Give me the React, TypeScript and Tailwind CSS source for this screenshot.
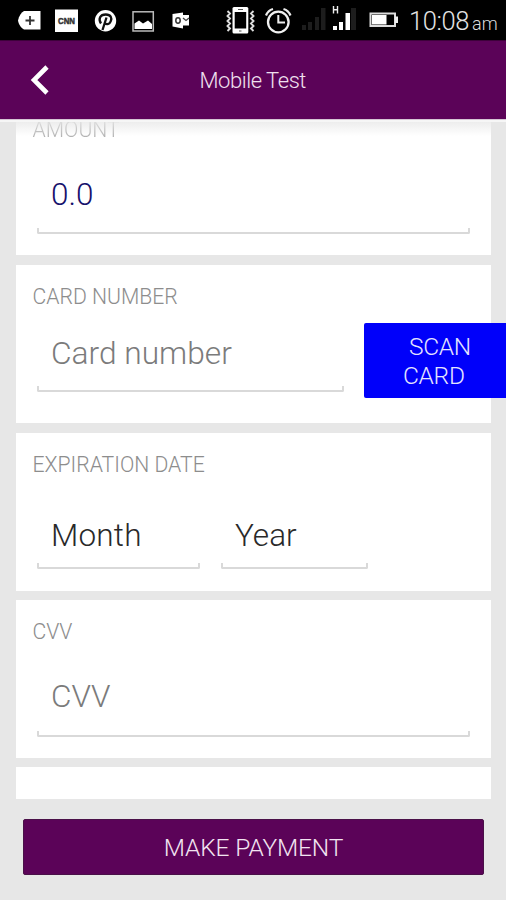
import type { ReactNode } from "react";

function Underline({ className }: { className: string }) {
  return <div className={`h-[6px] rounded-b-[2px] border-x-2 border-b-2 border-[#d9d9d9] ${className}`} />;
}

function Label({ children }: { children: ReactNode }) {
  return (
    <div className="h-6 whitespace-nowrap pl-[16.500px] text-[21.200px] font-light leading-[25px] text-[#8d8d8d]">{children}</div>
  );
}

function StatusBar() {
  return (
    <div className="flex h-10 shrink-0 bg-black text-white">
      <svg className="h-10 w-12" viewBox="0 0 48 40">
        <path d="M24 11H40.5V29.5H24C21 28 18.5 24 18 20.5C19 16 21 12.500 24 11Z" fill="#fff" />
        <path d="M30 16V25M25.500 20.500H34.500" stroke="#333" strokeWidth="1.800" />
      </svg>
      <svg className="h-10 w-9" viewBox="48 0 36 40">
        <rect x="55" y="9.500" width="23" height="22.500" fill="#fff" />
        <text x="66.500" y="24" textAnchor="middle" textLength="17" lengthAdjust="spacingAndGlyphs" className="font-['Liberation_Sans'] text-[9px] font-bold" fill="#333" stroke="#333" strokeWidth=".5">CNN</text>
      </svg>
      <svg className="h-10 w-10" viewBox="84 0 40 40">
        <circle cx="105.500" cy="20.800" r="10.700" fill="#fff" />
        <path d="M101 23.500C98 19 100 14.500 105.800 14.500C111 14.500 112 18 110.800 21C109.500 24.800 105.500 25 104.500 22.500M106.500 17.500L102.500 30" fill="none" stroke="#111" strokeWidth="2.300" />
      </svg>
      <svg className="h-10 w-10" viewBox="124 0 40 40">
        <rect x="133" y="11.800" width="20.300" height="19.200" fill="none" stroke="#bbb" strokeWidth="1.500" />
        <path d="M134.500 29V23.500L139 20.500L143 23.500L148 20.500L152 24V29Z" fill="#fff" />
      </svg>
      <svg className="h-10 w-[56px]" viewBox="164 0 56 40">
        <path d="M172.500 14L183 12.500V28.500L172.500 26.500Z" fill="#fff" />
        <path d="M183 15H189V25.500H183" fill="#fff" />
        <path d="M183 18L186 20.500L189 18" fill="none" stroke="#444" strokeWidth="1.300" />
        <ellipse cx="178" cy="20.500" rx="2.200" ry="2.700" fill="none" stroke="#333" strokeWidth="1.500" />
      </svg>
      <svg className="h-10 w-10" viewBox="220 0 40 40">
        <rect x="232.500" y="7" width="15.800" height="26.500" rx="1.500" fill="#fff" />
        <rect x="234.700" y="12" width="11.500" height="16.500" />
        <path d="M238 9.500H243M239 31H241.500" stroke="#555" strokeWidth="1" />
        <path d="M227.500 11L230 13.500L227.500 16L230 18.500L227.500 21L230 23.500L227.500 26L230 28.500L227.500 31M253.500 11L251 13.500L253.500 16L251 18.500L253.500 21L251 23.500L253.500 26L251 28.500L253.500 31" fill="none" stroke="#ddd" strokeWidth="1.900" />
      </svg>
      <svg className="h-10 w-9" viewBox="260 0 36 40">
        <circle cx="278.300" cy="22" r="10.300" fill="none" stroke="#f2f2f2" strokeWidth="2.300" />
        <path d="M278.300 15V22.500H285" fill="none" stroke="#eee" strokeWidth="2" />
        <path d="M266 15.500Q268 10.500 273 9M283.500 9Q288.500 10.500 290.500 15.500" fill="none" stroke="#eee" strokeWidth="2.200" />
      </svg>
      <svg className="h-10 w-[66px]" viewBox="296 0 66 40">
        <path d="M302 25H306V30H302ZM308 22H312V30H308ZM315 17H319V30H315ZM321 8H325.500V30H321Z" fill="#1d1d1d" />
        <path d="M351 8H356V30H351Z" fill="#1d1d1d" />
        <path d="M333 26H337V30H333ZM339 22H343V30H339ZM345.500 13H350V30H345.500Z" fill="#fff" />
        <path d="M333.500 6V13.500M337.500 6V13.500M333.500 9.800H337.500" stroke="#eee" strokeWidth="1.400" />
      </svg>
      <svg className="h-10 w-[47px]" viewBox="362 0 47 40">
        <rect x="370.500" y="13.500" width="24.500" height="12.500" fill="none" stroke="#ddd" strokeWidth="2" />
        <rect x="372" y="15" width="14.500" height="9.500" fill="#fff" />
        <path d="M395 16.500H398V23H395Z" fill="#eee" />
      </svg>
      <span className="w-[63px] whitespace-nowrap text-[25.500px] font-light leading-[43px] tracking-[-.4px] text-[#e4e4e4]">10:08</span>
      <span className="whitespace-nowrap text-[18px] font-light leading-[47px] text-[#ddd]">am</span>
    </div>
  );
}

export default function App() {
  return (
    <div className="flex h-[900px] w-[506px] flex-col overflow-hidden bg-[#e7e7e7] font-[Roboto,sans-serif]">
      <StatusBar />
      <header className="flex h-[79px] shrink-0 items-center border-t border-[#3d013a] bg-[#5b0358]">
        <svg className="ml-[30px] h-[32px] w-5" viewBox="0 0 20 32">
          <path d="M17 3L4 16L17 29" fill="none" stroke="#fff" strokeWidth="4.600" />
        </svg>
        <h1 className="ml-[149.500px] whitespace-nowrap pt-[2px] text-[22px] font-light leading-8 tracking-[-.45px] text-[#f0e0ef]">Mobile Test</h1>
      </header>
      <main className="flex h-[680px] shrink-0 flex-col overflow-hidden">
        <div className="h-[3px] shrink-0 border-t border-[#d5c5d4] bg-[#f6f6f6]" />
        <section className="mb-[10px] ml-4 h-[133px] w-[475px] shrink-0 bg-white bg-gradient-to-b from-[#ededed] to-white to-[14px]">
          <div className="h-[20px] whitespace-nowrap bg-gradient-to-b from-[#dcdcdc] to-[#a4a4a4] bg-clip-text pl-[16.500px] text-[21.200px] font-light leading-[16px] text-transparent">AMOUNT</div>
          <div className="mt-[34px] pl-[35px] text-[31.500px] font-light leading-[38px] text-[#17116c]">0.0</div>
          <Underline className="ml-[21px] mt-[14px] w-[433px]" />
        </section>
        <section className="mb-[10px] ml-4 h-[158px] w-[475px] shrink-0 bg-white pt-[19px]">
          <Label>CARD NUMBER</Label>
          <div className="flex w-[490px]">
            <div className="w-[348px] shrink-0 pt-[27px]">
              <div className="whitespace-nowrap pl-[35px] text-[31.700px] font-light leading-[38px] text-[#7b7b7b]">Card number</div>
              <Underline className="ml-[21px] mt-[13px] w-[307px]" />
            </div>
            <button className="mt-[15px] flex h-[75px] w-[150px] shrink-0 flex-col rounded-[2px] bg-[#0000fa] pt-[10px] text-left text-[24.500px] font-light leading-[28.500px] tracking-[-.3px] text-[#e4e4ff]">
              <span className="pl-[45px]">SCAN</span>
              <span className="pl-[39px]">CARD</span>
            </button>
          </div>
        </section>
        <section className="mb-[9px] ml-4 h-[158px] w-[475px] shrink-0 bg-white pt-[19px]">
          <Label>EXPIRATION DATE</Label>
          <div className="mt-[41px] flex text-[31.500px] font-light leading-[38px] text-[#292929]">
            <div className="ml-[21px] w-[163px]">
              <div className="pl-[14px] tracking-[.2px]">Month</div>
              <Underline className="mt-[8px]" />
            </div>
            <div className="ml-[21px] w-[147px]">
              <div className="pl-[14px]">Year</div>
              <Underline className="mt-[8px]" />
            </div>
          </div>
        </section>
        <section className="mb-[9px] ml-4 h-[158px] w-[475px] shrink-0 bg-white pt-[19px]">
          <Label>CVV</Label>
          <div className="mt-[35px] pl-[35px] text-[31.500px] font-light leading-[38px] text-[#7b7b7b]">CVV</div>
          <Underline className="ml-[21px] mt-[15px] w-[433px]" />
        </section>
        <section className="ml-4 h-8 w-[475px] shrink-0 bg-white" />
      </main>
      <button className="ml-[23px] mt-5 h-[56px] w-[461px] shrink-0 rounded-[2px] border border-[#4a1048] bg-[#5b0358] pt-px text-[24.500px] font-light leading-[53px] tracking-[-.15px] text-[#f2e4f1]">
        MAKE PAYMENT
      </button>
    </div>
  );
}
